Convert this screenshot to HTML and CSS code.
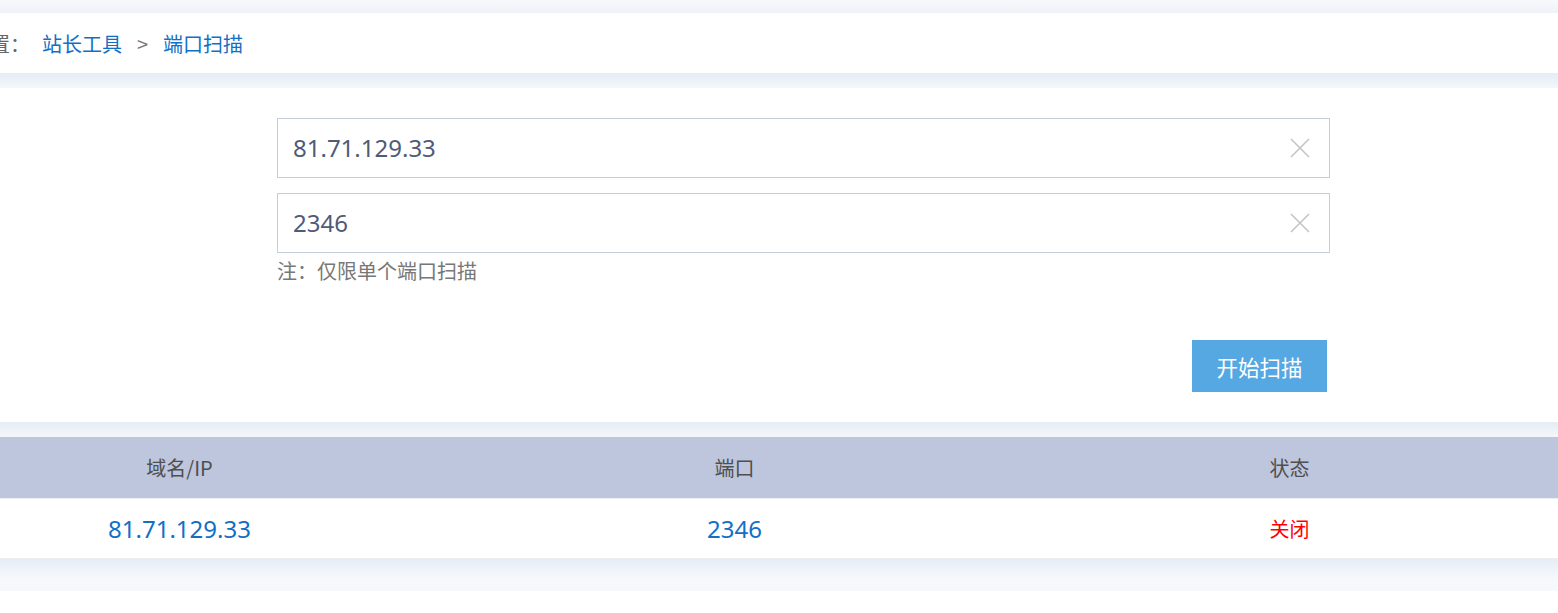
FILE: index.html
```html
<!DOCTYPE html>
<html lang="zh-CN">
<head>
<meta charset="utf-8">
<title>端口扫描</title>
<link rel="stylesheet" href="styles.css">
</head>
<body>
<div class="page">
  <div class="band band-top"></div>
  <div class="crumb">
    <span class="crumb-label">当前位置：</span>
    <a class="crumb-link" href="#">站长工具</a>
    <span class="crumb-sep">&gt;</span>
    <a class="crumb-link" href="#">端口扫描</a>
  </div>
  <div class="band"></div>
  <div class="panel">
    <div class="form">
      <div class="field">
        <input class="field-input" type="text" value="81.71.129.33">
        <svg class="field-clear" width="20" height="20" viewBox="0 0 20 20"><path d="M1 1L19 19M19 1L1 19" stroke="#c4c4c4" stroke-width="1.6" fill="none"/></svg>
      </div>
      <div class="field">
        <input class="field-input" type="text" value="2346">
        <svg class="field-clear" width="20" height="20" viewBox="0 0 20 20"><path d="M1 1L19 19M19 1L1 19" stroke="#c4c4c4" stroke-width="1.6" fill="none"/></svg>
      </div>
      <div class="note">注：仅限单个端口扫描</div>
      <div class="actions">
        <button class="btn" type="button">开始扫描</button>
      </div>
    </div>
  </div>
  <div class="band"></div>
  <div class="table">
    <div class="thead">
      <div class="cell">域名/IP</div>
      <div class="cell">端口</div>
      <div class="cell">状态</div>
    </div>
    <div class="trow">
      <div class="cell cell-num">81.71.129.33</div>
      <div class="cell cell-num">2346</div>
      <div class="cell cell-closed">关闭</div>
    </div>
  </div>
  <div class="band band-end"></div>
</div>
</body>
</html>
```

FILE: styles.css
```css
html, body {
  margin: 0;
  padding: 0;
  background: #ffffff;
  overflow: hidden;
}
body {
  font-family: "Noto Sans CJK SC", "Noto Sans", sans-serif;
  color: #555;
}
.page {
  width: 1665px;
  margin-left: -98px;
  background: #f5f7fa;
}
.band {
  height: 15px;
  background: linear-gradient(#e5ecf5, #f4f7fa);
}
.band-top {
  height: 13px;
  background: linear-gradient(#f8f9fb, #eef2f7);
}
.band-end {
  height: 32px;
  background: linear-gradient(#e6edf6, #f6f8fb 60%);
}
.crumb {
  height: 60px;
  background: #fff;
  display: flex;
  align-items: center;
  padding-left: 28px;
  font-size: 20px;
}
.crumb-label {
  color: #666;
  margin-right: 12px;
}
.crumb-link {
  color: #1170c6;
  text-decoration: none;
}
.crumb-sep {
  color: #777;
  margin: 0 15px 0 15px;
}
.panel {
  background: #fff;
  padding: 30px 0 30px 375px;
}
.form {
  width: 1053px;
  display: flex;
  flex-direction: column;
}
.field {
  height: 58px;
  border: 1px solid #c7cedb;
  display: flex;
  align-items: center;
  padding: 0 19px 0 15px;
}
.field + .field {
  margin-top: 15px;
}
.field-input {
  flex: 1;
  border: 0;
  outline: 0;
  padding: 0 0 2px 0;
  font-family: "Noto Sans", sans-serif;
  font-size: 24px;
  color: #4e5b79;
  background: transparent;
}
.field-clear {
  flex: none;
  width: 20px;
  height: 20px;
}
.note {
  margin-top: 4px;
  line-height: 28px;
  font-size: 20px;
  color: #777;
}
.actions {
  display: flex;
  justify-content: flex-end;
  margin-top: 55px;
  padding-right: 3px;
}
.btn {
  width: 135px;
  height: 52px;
  border: 0;
  background: #55a8e2;
  color: #fff;
  font-family: "Noto Sans CJK SC", sans-serif;
  font-size: 21.5px;
  padding: 0;
}
.table {
  background: #fff;
}
.thead, .trow {
  display: grid;
  grid-template-columns: 1fr 1fr 1fr;
}
.thead {
  height: 61px;
  background: #bdc6dd;
  border-bottom: 1px solid #eceef2;
}
.trow {
  height: 59px;
  border-bottom: 1px solid #eceef2;
}
.cell {
  display: flex;
  align-items: center;
  justify-content: center;
  font-size: 20px;
}
.thead .cell {
  color: #4f4f4f;
}
.cell-num {
  font-family: "Noto Sans", sans-serif;
  font-size: 24px;
  color: #1170c6;
}
.cell-closed {
  color: #f00;
}
```
